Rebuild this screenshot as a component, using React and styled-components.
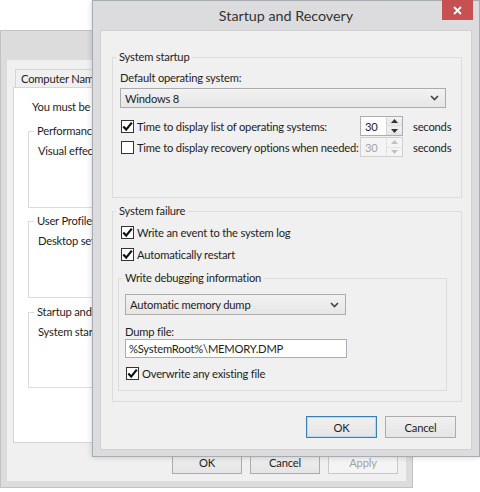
import React from 'react';
import styled, { createGlobalStyle } from 'styled-components';

const GlobalStyle = createGlobalStyle`
  html, body {
    margin: 0;
    padding: 0;
    background: #fff;
  }
  body {
    font-family: Lato, "Noto Sans", "Liberation Sans", sans-serif;
    font-size: 11.2px;
    letter-spacing: -0.2px;
    color: #1e1e1e;
  }
  * { box-sizing: border-box; }
`;

const Desktop = styled.div`
  position: relative;
  width: 480px;
  height: 492px;
  overflow: hidden;
  background: #fff;
`;

/* ---------- back window (System Properties) ---------- */

const BackWindow = styled.div`
  position: absolute;
  left: 0;
  top: 30px;
  width: 413px;
  height: 458px;
  border: 1px solid #c2c2c2;
  background: #dcdcdc;
  padding: 29px 6px 6px 6px;
  display: flex;
  flex-direction: column;
`;

const BackBody = styled.div`
  flex: 1;
  background: #f0f0f0;
  padding: 9px 8px 7px 6px;
  display: flex;
  flex-direction: column;
`;

const TabStrip = styled.div`
  display: flex;
  padding-left: 2px;
`;

const Tab = styled.div`
  height: 19px;
  line-height: 17px;
  padding: 0 6px 0 5px;
  border: 1px solid #d5d5d5;
  border-bottom: none;
  background: #f0f0f0;
  margin-bottom: -1px;
  white-space: nowrap;
`;

const TabPanel = styled.div`
  flex: 1;
  background: #fff;
  border: 1px solid #d5d5d5;
  padding: 11px 10px 0 14px;
  display: flex;
  flex-direction: column;
`;

const Note = styled.div`
  padding-left: 4px;
  line-height: 16px;
  white-space: nowrap;
  overflow: hidden;
`;

const BackGroup = styled.div`
  position: relative;
  height: ${p => p.h}px;
  margin-top: ${p => p.mt}px;
  border: 1px solid #dcdcdc;
  padding: 11px 8px 0 9px;
`;

const BackGroupLabel = styled.span`
  position: absolute;
  top: -9px;
  left: 5px;
  padding: 0 3px;
  background: #fff;
  line-height: 16px;
  white-space: nowrap;
`;

const BackLine = styled.div`
  line-height: 16px;
  white-space: nowrap;
  overflow: hidden;
`;

const ButtonRow = styled.div`
  display: flex;
  justify-content: flex-end;
  gap: ${p => p.gap || 8}px;
  margin-top: ${p => p.mt || 0}px;
  padding-right: ${p => p.pr || 0}px;
`;

const Button = styled.div`
  width: ${p => p.w || 70}px;
  height: ${p => p.h || 23}px;
  display: flex;
  align-items: center;
  justify-content: center;
  border: 1px solid ${p => (p.focused ? '#3c7fb1' : p.disabled ? '#c9c9c9' : '#acacac')};
  background: ${p => (p.disabled ? '#f4f4f4' : 'linear-gradient(#f0f0f0, #e5e5e5)')};
  color: ${p => (p.disabled ? '#a3a3a3' : '#1e1e1e')};
  box-shadow: ${p => (p.focused ? 'inset 0 0 0 1px #b8d6f0' : 'none')};
`;

/* ---------- front window (Startup and Recovery) ---------- */

const FrontWindow = styled.div`
  position: absolute;
  left: 92px;
  top: 0;
  width: 388px;
  height: 457px;
  border: 1px solid #a8abaf;
  background: #dcdcde;
  display: flex;
  flex-direction: column;
  box-shadow: 0 0 6px rgba(0, 0, 0, 0.18);
  z-index: 1;
`;

const TitleBar = styled.div`
  position: relative;
  height: 29px;
  display: flex;
  align-items: center;
  justify-content: center;
  font-size: 14.3px;
  letter-spacing: 0;
  color: #333;
  padding-bottom: 1px;
`;

const CloseButton = styled.div`
  position: absolute;
  top: -1px;
  right: 6px;
  width: 31px;
  height: 20px;
  background: #c75050;
  display: flex;
  align-items: center;
  justify-content: center;
`;

const Client = styled.div`
  flex: 1;
  margin: 0 7px 6px 7px;
  background: #f0f0f0;
  border: 1px solid #cfd0d2;
  padding: 26px 9px 0 11px;
  display: flex;
  flex-direction: column;
`;

const Group = styled.div`
  position: relative;
  border: 1px solid #dcdcdc;
  margin-top: ${p => p.mt || 0}px;
  margin-left: ${p => p.ml || 0}px;
  margin-right: ${p => p.mr || 0}px;
  padding: ${p => p.pad};
  display: flex;
  flex-direction: column;
`;

const GroupLabel = styled.span`
  position: absolute;
  top: -9px;
  left: 3px;
  padding: 0 3px;
  background: #f0f0f0;
  line-height: 16px;
  white-space: nowrap;
`;

const Label = styled.div`
  line-height: ${p => p.lh || 16}px;
  margin-top: ${p => p.mt || 0}px;
  white-space: nowrap;
`;

const Select = styled.div`
  width: ${p => p.w}px;
  height: ${p => p.h || 20}px;
  margin-top: ${p => p.mt || 0}px;
  border: 1px solid #acacac;
  background: linear-gradient(#f2f2f2, #e6e6e6);
  display: flex;
  align-items: center;
  justify-content: space-between;
  padding: 0 6px 0 4px;
`;

const TextBox = styled.div`
  width: ${p => p.w}px;
  height: 19px;
  border: 1px solid #abadb3;
  background: #fff;
  display: flex;
  align-items: center;
  padding-left: 3px;
  white-space: nowrap;
`;

const CheckRow = styled.div`
  display: flex;
  align-items: center;
  height: ${p => p.h || 18}px;
  margin-top: ${p => p.mt || 0}px;
  margin-left: ${p => p.ml || 0}px;
`;

const Box = styled.span`
  width: 13px;
  height: 13px;
  flex: none;
  border: 1px solid #333;
  background: #fff;
  display: flex;
  align-items: center;
  justify-content: center;
  margin-right: 3px;
`;

const CheckText = styled.span`
  flex: 1;
  white-space: nowrap;
`;

const Spin = styled.div`
  display: flex;
  flex: none;
  height: 20px;
  border: 1px solid ${p => (p.disabled ? '#d0d0d0' : '#abadb3')};
  background: ${p => (p.disabled ? '#f4f4f4' : '#fff')};
`;

const SpinValue = styled.div`
  width: 25px;
  display: flex;
  align-items: center;
  padding-left: 4px;
  color: ${p => (p.disabled ? '#a6a6a6' : '#1e1e1e')};
`;

const SpinButtons = styled.div`
  width: 16px;
  display: flex;
  flex-direction: column;
  border-left: 1px solid ${p => (p.disabled ? '#e2e2e2' : '#d6d6d6')};
`;

const SpinArrow = styled.div`
  flex: 1;
  display: flex;
  align-items: center;
  justify-content: center;
  background: ${p => (p.disabled ? '#f4f4f4' : 'linear-gradient(#f3f3f3, #e4e4e4)')};
  & + & {
    border-top: 1px solid ${p => (p.disabled ? '#e6e6e6' : '#cfcfcf')};
  }
`;

const Seconds = styled.span`
  width: 41px;
  flex: none;
  margin-left: 10px;
  white-space: nowrap;
`;

/* ---------- small drawings ---------- */

const Tick = () => (
  <svg width="11" height="11" viewBox="0 0 11 11">
    <path d="M1.3 5.4 L4.2 8.6 L9.8 1.6" fill="none" stroke="#111" strokeWidth="2.2" />
  </svg>
);

const Chevron = () => (
  <svg width="9" height="6" viewBox="0 0 9 6">
    <path d="M1 1 L4.5 4.5 L8 1" fill="none" stroke="#444" strokeWidth="1.6" />
  </svg>
);

const Tri = ({ up, color }) => (
  <svg width="7" height="4" viewBox="0 0 7 4">
    <path d={up ? 'M0 4 L3.5 0 L7 4 Z' : 'M0 0 L3.5 4 L7 0 Z'} fill={color} />
  </svg>
);

const CheckBox = ({ checked, children, ...rest }) => (
  <CheckRow {...rest}>
    <Box>{checked && <Tick />}</Box>
    <CheckText>{children}</CheckText>
  </CheckRow>
);

const SpinBox = ({ value, disabled }) => {
  const c = disabled ? '#c2c2c2' : '#333';
  return (
    <Spin disabled={disabled}>
      <SpinValue disabled={disabled}>{value}</SpinValue>
      <SpinButtons disabled={disabled}>
        <SpinArrow disabled={disabled}><Tri up color={c} /></SpinArrow>
        <SpinArrow disabled={disabled}><Tri color={c} /></SpinArrow>
      </SpinButtons>
    </Spin>
  );
};

export default function App() {
  return (
    <Desktop>
      <GlobalStyle />

      <BackWindow>
        <BackBody>
          <TabStrip>
            <Tab>Computer Name</Tab>
          </TabStrip>
          <TabPanel>
            <Note>You must be logged on as an Administrator to make most of these changes.</Note>
            <BackGroup mt={16} h={77}>
              <BackGroupLabel>Performance</BackGroupLabel>
              <BackLine>Visual effects, processor scheduling, memory usage, and virtual memory</BackLine>
            </BackGroup>
            <BackGroup mt={13} h={77}>
              <BackGroupLabel>User Profiles</BackGroupLabel>
              <BackLine>Desktop settings related to your sign-in</BackLine>
            </BackGroup>
            <BackGroup mt={14} h={76}>
              <BackGroupLabel>Startup and Recovery</BackGroupLabel>
              <BackLine>System startup, system failure, and debugging information</BackLine>
            </BackGroup>
          </TabPanel>
          <ButtonRow mt={8} gap={8}>
            <Button>OK</Button>
            <Button>Cancel</Button>
            <Button disabled>Apply</Button>
          </ButtonRow>
        </BackBody>
      </BackWindow>

      <FrontWindow>
        <TitleBar>
          Startup and Recovery
          <CloseButton>
            <svg width="9" height="9" viewBox="0 0 9 9">
              <path d="M1 1 L8 8 M8 1 L1 8" stroke="#fff" strokeWidth="1.8" />
            </svg>
          </CloseButton>
        </TitleBar>

        <Client>
          <Group pad="12px 7px 40px 7px">
            <GroupLabel>System startup</GroupLabel>
            <Label>Default operating system:</Label>
            <Select w={326} mt={2}>
              <span>Windows 8</span>
              <Chevron />
            </Select>
            <CheckRow h={20} mt={8} ml={1}>
              <Box><Tick /></Box>
              <CheckText>Time to display list of operating systems:</CheckText>
              <SpinBox value="30" />
              <Seconds>seconds</Seconds>
            </CheckRow>
            <CheckRow h={20} mt={1} ml={1}>
              <Box />
              <CheckText>Time to display recovery options when needed:</CheckText>
              <SpinBox value="30" disabled />
              <Seconds>seconds</Seconds>
            </CheckRow>
          </Group>

          <Group mt={13} pad="11px 8px 10px 8px">
            <GroupLabel>System failure</GroupLabel>
            <CheckBox checked>Write an event to the system log</CheckBox>
            <CheckBox checked mt={4}>Automatically restart</CheckBox>
            <Group mt={15} ml={-3} mr={6} pad="15px 8px 9px 6px">
              <GroupLabel>Write debugging information</GroupLabel>
              <Select w={221} h={21}>
                <span>Automatic memory dump</span>
                <Chevron />
              </Select>
              <Label lh={14} mt={10}>Dump file:</Label>
              <TextBox w={222}>%SystemRoot%\MEMORY.DMP</TextBox>
              <CheckBox checked h={16} mt={7} ml={1}>Overwrite any existing file</CheckBox>
            </Group>
          </Group>

          <ButtonRow mt={14} gap={8} pr={6}>
            <Button w={71} h={22} focused>OK</Button>
            <Button w={71} h={22}>Cancel</Button>
          </ButtonRow>
        </Client>
      </FrontWindow>
    </Desktop>
  );
}
